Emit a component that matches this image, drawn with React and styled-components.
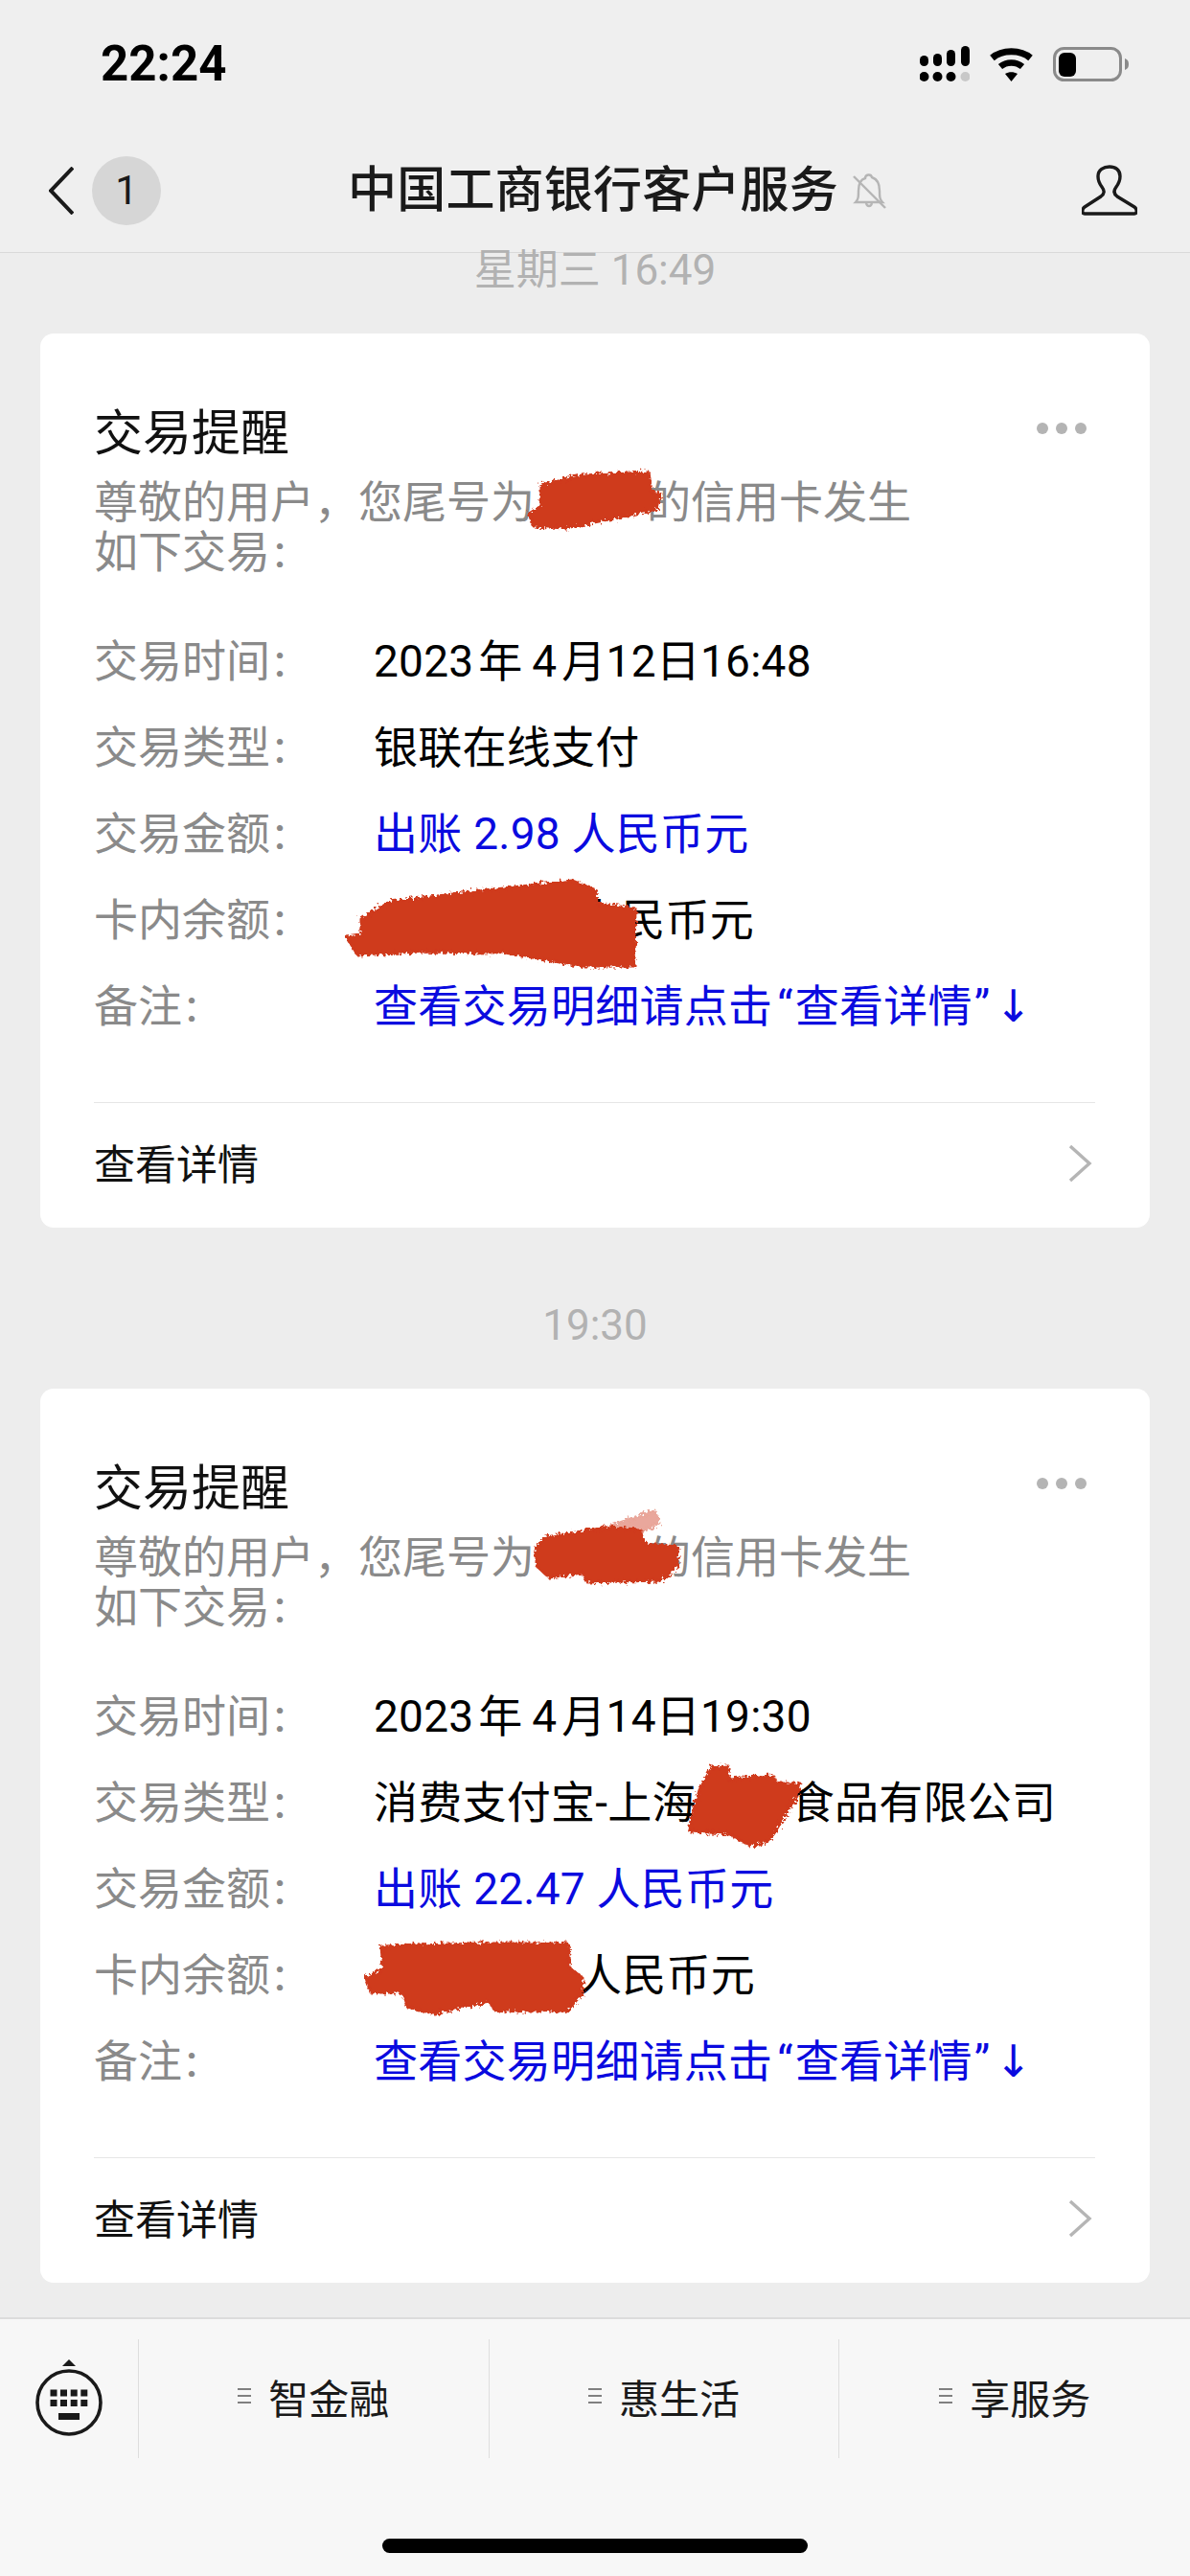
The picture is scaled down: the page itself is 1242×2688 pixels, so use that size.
import React from 'react'
import styled, { createGlobalStyle } from 'styled-components'

const GlobalStyle = createGlobalStyle`
  html, body {
    margin: 0;
    padding: 0;
    background: #ededed;
  }
  body {
    font-family: Roboto, "Noto Sans CJK SC", sans-serif;
    color: #000;
  }
  * {
    box-sizing: border-box;
  }
`

const Page = styled.div`
  width: 1242px;
  height: 2688px;
  display: flex;
  flex-direction: column;
  overflow: hidden;
  background: #ededed;
`

const StatusBar = styled.div`
  height: 134px;
  flex: none;
  display: flex;
  align-items: center;
  justify-content: space-between;
  padding: 0 64px 0 105px;
  background: #efefef;
`

const Clock = styled.div`
  font-size: 51px;
  font-weight: 700;
  line-height: 60px;
`

const StatusIcons = styled.div`
  display: flex;
  align-items: center;
  gap: 20px;
`

const NavBar = styled.div`
  height: 130px;
  flex: none;
  display: grid;
  grid-template-columns: 1fr auto 1fr;
  align-items: center;
  padding: 0 55px 0 51px;
  background: #efefef;
  border-bottom: 1px solid #d9d9d9;
`

const NavLeft = styled.div`
  display: flex;
  align-items: center;
  gap: 19px;
`

const Badge = styled.div`
  width: 72px;
  height: 72px;
  border-radius: 50%;
  background: #d6d6d6;
  color: #1a1a1a;
  display: flex;
  align-items: center;
  justify-content: center;
  font-size: 42px;
`

const NavTitle = styled.div`
  font-size: 51px;
  font-weight: 500;
  line-height: 70px;
  letter-spacing: 0.2px;
  color: #1a1a1a;
  white-space: nowrap;
`

const NavRight = styled.div`
  display: flex;
  align-items: center;
  justify-content: space-between;
  padding-left: 15px;
`

const Feed = styled.div`
  flex: 1;
  display: flex;
  flex-direction: column;
  gap: 84px;
  padding: 0 42px;
`

const Message = styled.div`
  display: flex;
  flex-direction: column;
  gap: 48px;
`

const Stamp = styled.div`
  height: 36px;
  line-height: 36px;
  font-size: 44px;
  text-align: center;
  color: #b2b2b2;
`

const Card = styled.div`
  position: relative;
  height: 933px;
  background: #fff;
  border-radius: 14px;
  padding-top: 75px;
`

const CardHead = styled.div`
  display: flex;
  align-items: center;
  justify-content: space-between;
  padding: 0 66px 0 56px;
  height: 60px;
`

const CardTitle = styled.div`
  font-size: 51px;
  line-height: 60px;
  color: #111;
`

const Dots = styled.div`
  display: flex;
  gap: 8px;
  margin-top: -12px;
`

const Dot = styled.span`
  width: 12px;
  height: 12px;
  border-radius: 50%;
  background: #b4b4b4;
`

const Intro = styled.div`
  margin: 15px 0 39px;
  padding-left: 56px;
  font-size: 46px;
  line-height: 52px;
  color: #8a8a8a;
`

const Row = styled.div`
  height: 90px;
  display: grid;
  grid-template-columns: 292px 1fr;
  align-items: center;
  padding-left: 56px;
  font-size: 46px;
  white-space: nowrap;
`

const Label = styled.div`
  color: #8a8a8a;
`

const Colon = styled.span`
  margin-left: 4px;
  font-weight: 500;
`

const Value = styled.div`
  letter-spacing: 0.25px;
  color: ${({ $blue }) => ($blue ? '#0a0adf' : '#000')};
`

const Masked = styled.span`
  display: inline-block;
  width: ${({ $width }) => $width}px;
`

const Quote = styled.span`
  padding: ${({ $closing }) => ($closing ? '0 5px 0 2px' : '0 2px 0 5px')};
`

const Arrow = styled.span`
  font-family: "DejaVu Sans", sans-serif;
  font-size: 46px;
`

const Divider = styled.div`
  height: 1px;
  margin: 59px 57px 0 56px;
  background: #e6e6e6;
`

const CardFooter = styled.div`
  height: 127px;
  display: flex;
  align-items: center;
  justify-content: space-between;
  padding: 0 60px 6px 56px;
  font-size: 43px;
  color: #111;
`

const FooterChevron = styled.svg`
  margin-top: 4px;
`

const SmearLayer = styled.svg`
  position: absolute;
  inset: 0;
  pointer-events: none;
`

const BottomBar = styled.div`
  height: 270px;
  flex: none;
  display: flex;
  flex-direction: column;
  align-items: center;
  background: #f7f7f7;
  border-top: 2px solid #dcdcdc;
`

const MenuRow = styled.div`
  width: 100%;
  height: 124px;
  margin-top: 21px;
  display: grid;
  grid-template-columns: 145px repeat(3, 1fr);
`

const KeyboardCell = styled.div`
  display: flex;
  align-items: center;
  justify-content: center;
  border-right: 1px solid #dedede;
`

const MenuItem = styled.div`
  display: flex;
  align-items: center;
  justify-content: center;
  gap: 18px;
  padding-bottom: 6px;
  font-size: 42px;
  color: #1a1a1a;
  border-right: ${({ $last }) => ($last ? 'none' : '1px solid #dedede')};
`

const HomeIndicator = styled.div`
  width: 444px;
  height: 15px;
  margin-top: 84px;
  border-radius: 8px;
  background: #000;
`

const SignalIcon = () => (
  <svg width="52" height="38" viewBox="0 0 52 38">
    <rect x="0" y="10" width="9" height="11" rx="4.5" />
    <rect x="14" y="8" width="9" height="13" rx="4.5" />
    <rect x="28" y="4" width="9" height="17" rx="4.5" />
    <rect x="43" y="0" width="9" height="21" rx="4.5" />
    <circle cx="4.5" cy="32" r="5" />
    <circle cx="18.5" cy="32" r="5" />
    <circle cx="32.5" cy="32" r="5" />
    <circle cx="47.5" cy="32" r="5" fill="#c8c8c8" />
  </svg>
)

const WifiIcon = () => (
  <svg width="47" height="36" viewBox="0 0 47 36">
    <path d="M3.5 11.5C14 2.5 33 2.5 43.5 11.5" fill="none" stroke="#000" strokeWidth="7" />
    <path d="M12 20.5C18.5 15 28.5 15 35 20.5" fill="none" stroke="#000" strokeWidth="6.5" />
    <path d="M17 28C21 25.5 26 25.5 30 28L23.5 36Z" />
  </svg>
)

const BatteryIcon = () => (
  <svg width="79" height="36" viewBox="0 0 79 36">
    <rect x="1.5" y="1.5" width="69" height="33" rx="10" fill="none" stroke="#8a8a8a" strokeWidth="3" />
    <rect x="6" y="6" width="18" height="25" rx="6" />
    <path d="M75 12C78 13 79 15 79 18C79 21 78 23 75 24Z" fill="#8a8a8a" />
  </svg>
)

const BackIcon = () => (
  <svg width="26" height="50" viewBox="0 0 26 50">
    <path d="M25 1L2 25L25 49" fill="none" stroke="#1a1a1a" strokeWidth="4" />
  </svg>
)

const MutedBell = () => (
  <svg width="36" height="38" viewBox="0 0 36 38" fill="none" stroke="#b5b5b5" strokeWidth="2.4">
    <path d="M3 31C6 28 6 25 6 19C6 11 9 7 13 6C13 2 19 1 20 5C26 7 28 12 28 19C28 25 28 28 31 31Z" />
    <path d="M14 32C15 36 19 36 20 32" />
    <path d="M1 4L34 37" />
  </svg>
)

const PersonIcon = () => (
  <svg width="58" height="53" viewBox="0 0 58 53">
    <path
      d="M3 51L55 51C58 51 58 46 55 44L37 33C33 30 33 27 36 23C39 19 40 15 40 12C40 5 35 2 29 2C23 2 17 5 17 12C17 15 18 19 21 23C24 27 24 30 20 33L3 44C0 46 0 51 3 51Z"
      fill="none"
      stroke="#1a1a1a"
      strokeWidth="3.4"
    />
  </svg>
)

const ChevronIcon = () => (
  <FooterChevron width="26" height="40" viewBox="0 0 26 40">
    <path d="M3 2L23 20L3 38" fill="none" stroke="#b5b5b5" strokeWidth="3.4" />
  </FooterChevron>
)

const KeyboardIcon = () => (
  <svg width="72" height="82" viewBox="36 2460 72 82" fill="#1a1a1a">
    <path d="M65 2467L72 2460L79 2467Z" />
    <circle cx="72" cy="2505" r="33" fill="none" stroke="#1a1a1a" strokeWidth="3.6" />
    {[52.5, 63, 73.7, 84.3].map((x) => (
      <React.Fragment key={x}>
        <rect x={x} y="2491.5" width="7" height="7" />
        <rect x={x} y="2502" width="7" height="7" />
      </React.Fragment>
    ))}
    <rect x="61" y="2516" width="22" height="7" />
  </svg>
)

const MenuIcon = () => (
  <svg width="14" height="18" viewBox="0 0 14 18">
    <path d="M0 2H14M0 9H14M0 16H14" stroke="#808080" strokeWidth="2" />
  </svg>
)

// paint-over marks, points are page coordinates so each card passes its own top
const Smears = ({ top, marks }) => (
  <SmearLayer width="1158" height="933" viewBox={`42 ${top} 1158 933`}>
    <defs>
      <filter id={`rough-${top}`} x="-10%" y="-10%" width="120%" height="120%">
        <feTurbulence type="fractalNoise" baseFrequency="0.3" numOctaves="2" seed="4" />
        <feDisplacementMap in="SourceGraphic" scale="9" />
        <feGaussianBlur stdDeviation="0.6" />
      </filter>
    </defs>
    <g filter={`url(#rough-${top})`} fill="#cf3a1f" stroke="#cf3a1f" strokeWidth="3" strokeLinejoin="round">
      {marks.map((m) => (
        <polygon key={m.points} points={m.points} opacity={m.faint ? 0.45 : 1} />
      ))}
    </g>
  </SmearLayer>
)

const Notice = () => (
  <>
    查看交易明细请点击<Quote>“</Quote>查看详情<Quote $closing>”</Quote>
    <Arrow>↓</Arrow>
  </>
)

const messages = [
  {
    stamp: '星期三 16:49',
    top: 347,
    rows: [
      ['交易时间', '2023\u200A年\u20094\u200A月12日16:48'],
      ['交易类型', '银联在线支付'],
      ['交易金额', '出账 2.98 人民币元', true],
      ['卡内余额', <><Masked $width={212} />人民币元</>],
      ['备注', <Notice />, true],
    ],
    marks: [
      { points: '552,535 565,527 565,505 607,495 677,492 680,512 690,515 686,530 640,540 590,550 557,548' },
      { points: '362,977 377,975 377,958 407,940 473,932 597,918 622,928 623,942 663,947 662,1007 607,1007 527,993 440,992 373,995' },
    ],
  },
  {
    stamp: '19:30',
    top: 1448,
    rows: [
      ['交易时间', '2023\u200A年\u20094\u200A月14日19:30'],
      ['交易类型', <>消费支付宝-上海<Masked $width={98} />食品有限公司</>],
      ['交易金额', '出账 22.47 人民币元', true],
      ['卡内余额', <><Masked $width={213} />人民币元</>],
      ['备注', <Notice />, true],
    ],
    marks: [
      { points: '633,1593 683,1575 688,1588 670,1598', faint: true },
      { points: '560,1613 570,1603 633,1593 668,1595 672,1610 707,1613 707,1633 690,1648 613,1650 608,1640 573,1645 560,1633' },
      { points: '730,1867 743,1843 760,1842 760,1855 807,1852 810,1860 835,1860 832,1873 817,1897 803,1920 783,1925 760,1912 720,1910 720,1903' },
      { points: '382,2063 400,2053 398,2030 503,2027 593,2027 595,2053 608,2063 607,2080 592,2097 517,2097 510,2087 453,2100 425,2093 420,2078 387,2078' },
    ],
  },
]

const menus = ['智金融', '惠生活', '享服务']

const App = () => (
  <Page>
    <GlobalStyle />
    <StatusBar>
      <Clock>22:24</Clock>
      <StatusIcons>
        <SignalIcon />
        <WifiIcon />
        <BatteryIcon />
      </StatusIcons>
    </StatusBar>
    <NavBar>
      <NavLeft>
        <BackIcon />
        <Badge>1</Badge>
      </NavLeft>
      <NavTitle>中国工商银行客户服务</NavTitle>
      <NavRight>
        <MutedBell />
        <PersonIcon />
      </NavRight>
    </NavBar>
    <Feed>
      {messages.map((msg) => (
        <Message key={msg.top}>
          <Stamp>{msg.stamp}</Stamp>
          <Card>
            <CardHead>
              <CardTitle>交易提醒</CardTitle>
              <Dots>
                <Dot />
                <Dot />
                <Dot />
              </Dots>
            </CardHead>
            <Intro>
              尊敬的用户，您尾号为<Masked $width={117} />的信用卡发生
              <br />
              如下交易<Colon>:</Colon>
            </Intro>
            {msg.rows.map(([label, value, blue]) => (
              <Row key={label}>
                <Label>
                  {label}
                  <Colon>:</Colon>
                </Label>
                <Value $blue={blue}>{value}</Value>
              </Row>
            ))}
            <Divider />
            <CardFooter>
              查看详情
              <ChevronIcon />
            </CardFooter>
            <Smears top={msg.top} marks={msg.marks} />
          </Card>
        </Message>
      ))}
    </Feed>
    <BottomBar>
      <MenuRow>
        <KeyboardCell>
          <KeyboardIcon />
        </KeyboardCell>
        {menus.map((name, i) => (
          <MenuItem key={name} $last={i === menus.length - 1}>
            <MenuIcon />
            {name}
          </MenuItem>
        ))}
      </MenuRow>
      <HomeIndicator />
    </BottomBar>
  </Page>
)

export default App
